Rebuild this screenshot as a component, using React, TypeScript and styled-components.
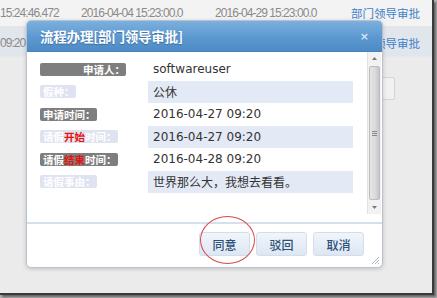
import React from 'react';
import styled, { createGlobalStyle } from 'styled-components';

const GlobalStyle = createGlobalStyle`
  html, body {
    margin: 0;
    padding: 0;
    background: #b4b4b4;
  }
  body {
    width: 437px;
    height: 298px;
    overflow: hidden;
  }
`;

const Frame = styled.div`
  position: relative;
  width: 432px;
  height: 293px;
  background: #ebebeb;
  border-right: 2px solid #3a3a3a;
  border-bottom: 2px solid #3a3a3a;
  box-shadow: 2px 2px 2px rgba(0, 0, 0, 0.45);
  overflow: hidden;
  font-family: 'Liberation Sans', 'Noto Sans CJK SC', sans-serif;
`;

const GridRow = styled.div<{ $alt?: boolean }>`
  display: flex;
  align-items: center;
  height: ${(p) => (p.$alt ? '30px' : '27px')};
  padding-top: ${(p) => (p.$alt ? '2px' : '0')};
  box-sizing: border-box;
  background: ${(p) => (p.$alt ? '#e1e5ec' : '#f3f3f3')};
  border-bottom: 1px solid ${(p) => (p.$alt ? '#e4e7ec' : '#e6e6e6')};
`;

const GridCell = styled.span<{ $w: number; $link?: boolean }>`
  flex: 0 0 ${(p) => p.$w}px;
  white-space: nowrap;
  overflow: hidden;
  font-size: ${(p) => (p.$link ? '11.5px' : '12px')};
  letter-spacing: ${(p) => (p.$link ? '0' : '-0.95px')};
  color: ${(p) => (p.$link ? '#3d7fc8' : '#8a8a8a')};
  font-family: ${(p) => (p.$link ? "'Noto Sans CJK SC', sans-serif" : "'Liberation Sans', sans-serif")};
`;

const GhostBox = styled.div`
  width: 60px;
  height: 21px;
  margin: 20px 0 0 333px;
  background: #f1f1f1;
  border: 1px solid #d4d4d4;
  border-radius: 2px;
`;

const Dialog = styled.div`
  position: absolute;
  left: 26px;
  top: 20px;
  width: 357px;
  height: 248px;
  box-sizing: border-box;
  display: flex;
  flex-direction: column;
  background: #fff;
  border: 1px solid #b9c3cf;
  border-radius: 5px;
  box-shadow: 0 1px 4px rgba(0, 0, 0, 0.18);
`;

const Header = styled.div`
  height: 30px;
  flex: 0 0 30px;
  display: flex;
  align-items: center;
  justify-content: space-between;
  padding: 0 13px 0 13px;
  background: linear-gradient(#7bb0de, #5c98d0 55%, #4e8bc6);
  border-radius: 4px 4px 0 0;
  border-bottom: 1px solid #4a82ba;
`;

const Title = styled.span`
  color: #fff;
  font-family: 'Noto Sans CJK SC', sans-serif;
  font-weight: 700;
  font-size: 13.5px;
  letter-spacing: -0.2px;
  text-shadow: 0 1px 1px rgba(30, 70, 120, 0.5);
`;

const Close = styled.span`
  color: #d4e4f4;
  font-family: 'DejaVu Sans', sans-serif;
  font-weight: 700;
  font-size: 11px;
`;

const Content = styled.div`
  flex: 0 0 162px;
  display: flex;
`;

const ScrollArea = styled.div`
  flex: 1;
  padding: 6px 0 0 13px;
`;

const FormTable = styled.div`
  display: grid;
  grid-template-columns: 108px 205px;
  grid-auto-rows: 22.5px;
`;

const LabelCell = styled.div`
  display: flex;
  align-items: center;
`;

const Chip = styled.span<{ $dim?: boolean; $width?: number }>`
  display: inline-block;
  height: 13px;
  line-height: 13px;
  width: ${(p) => (p.$width ? `${p.$width}px` : 'auto')};
  padding: 0 1px 0 3px;
  text-align: right;
  border-radius: 2px;
  background: ${(p) => (p.$dim ? '#dfe3f1' : '#7e7e7e')};
  color: #fff;
  font-family: 'Noto Sans CJK SC', sans-serif;
  font-weight: 700;
  font-size: 10.5px;
  white-space: nowrap;
`;

const Red = styled.span`
  color: #e8120c;
`;

const ValueCell = styled.div<{ $shade?: boolean }>`
  display: flex;
  align-items: center;
  padding-left: 5px;
  background: ${(p) => (p.$shade ? '#e4e9f6' : 'transparent')};
  color: #333;
  font-family: 'DejaVu Sans', 'Noto Sans CJK SC', sans-serif;
  font-size: 12px;
  white-space: nowrap;
`;

const ScrollBar = styled.div`
  flex: 0 0 13px;
  margin-right: 1px;
  display: flex;
  flex-direction: column;
  background: #f2f2f2;
  border-left: 1px solid #e2e2e2;
`;

const Arrow = styled.div`
  flex: 0 0 13px;
  display: flex;
  align-items: center;
  justify-content: center;
`;

const Thumb = styled.div`
  flex: 1;
  margin: 1px 1px;
  display: flex;
  align-items: center;
  justify-content: center;
  background: linear-gradient(90deg, #e6e6e6, #d9d9d9 60%, #c6c6c6);
  border: 1px solid #bdbdbd;
  border-radius: 2px;
`;

const Footer = styled.div`
  position: relative;
  flex: 1;
  margin-top: 8px;
  border-top: 2px solid #d6e0ec;
  display: flex;
  justify-content: flex-end;
  align-items: flex-start;
  gap: 6px;
  padding: 8px 18px 0 0;
`;

const Button = styled.button`
  width: 51px;
  height: 24px;
  padding: 0;
  border: 1px solid #d3deeb;
  border-radius: 3px;
  background: linear-gradient(#f1f5fb, #dde7f3);
  color: #2d4f78;
  font-family: 'Noto Sans CJK SC', sans-serif;
  font-size: 12px;
  font-weight: 500;
`;

const Grip = styled.svg`
  position: absolute;
  right: 2px;
  bottom: 2px;
`;

const Annotation = styled.div`
  position: absolute;
  left: 200px;
  top: 216px;
  width: 55px;
  height: 48px;
  box-sizing: border-box;
  border: 1.5px solid #d9494a;
  border-radius: 50%;
`;

const rows = [
  { label: <>申请人：</>, value: 'softwareuser', wide: true },
  { label: <>假种：</>, value: '公休' },
  { label: <>申请时间：</>, value: '2016-04-27 09:20' },
  { label: <>请假<Red>开始</Red>时间：</>, value: '2016-04-27 09:20' },
  { label: <>请假<Red>结束</Red>时间：</>, value: '2016-04-28 09:20' },
  { label: <>请假事由：</>, value: '世界那么大，我想去看看。' },
];

const App: React.FC = () => (
  <>
    <GlobalStyle />
    <Frame>
      <GridRow>
        <GridCell $w={81}>15:24:46.472</GridCell>
        <GridCell $w={134}>2016-04-04 15:23:00.0</GridCell>
        <GridCell $w={136}>2016-04-29 15:23:00.0</GridCell>
        <GridCell $w={80} $link>部门领导审批</GridCell>
      </GridRow>
      <GridRow $alt>
        <GridCell $w={26}>09:20:31.108</GridCell>
        <GridCell $w={325} />
        <GridCell $w={80} $link>部门领导审批</GridCell>
      </GridRow>
      <GhostBox />

      <Dialog>
        <Header>
          <Title>流程办理[部门领导审批]</Title>
          <Close>×</Close>
        </Header>
        <Content>
          <ScrollArea>
            <FormTable>
              {rows.map((r, i) => (
                <React.Fragment key={i}>
                  <LabelCell>
                    <Chip $dim={i % 2 === 1} $width={r.wide ? 82 : undefined}>
                      {r.label}
                    </Chip>
                  </LabelCell>
                  <ValueCell $shade={i % 2 === 1}>{r.value}</ValueCell>
                </React.Fragment>
              ))}
            </FormTable>
          </ScrollArea>
          <ScrollBar>
            <Arrow>
              <svg width="5" height="3" viewBox="0 0 5 3">
                <path d="M0 3 L2.5 0 L5 3 Z" fill="#777" />
              </svg>
            </Arrow>
            <Thumb>
              <svg width="5" height="5" viewBox="0 0 5 5">
                <path d="M0 0.5 H5 M0 2.5 H5 M0 4.5 H5" stroke="#888" strokeWidth="1" />
              </svg>
            </Thumb>
            <Arrow>
              <svg width="5" height="3" viewBox="0 0 5 3">
                <path d="M0 0 L2.5 3 L5 0 Z" fill="#777" />
              </svg>
            </Arrow>
          </ScrollBar>
        </Content>
        <Footer>
          <Button>同意</Button>
          <Button>驳回</Button>
          <Button>取消</Button>
          <Grip width="9" height="9" viewBox="0 0 9 9">
            <path d="M8 1 L1 8 M8 4 L4 8 M8 7 L7 8" stroke="#a9b6c6" strokeWidth="1" />
          </Grip>
        </Footer>
      </Dialog>
      <Annotation />
    </Frame>
  </>
);

export default App;
